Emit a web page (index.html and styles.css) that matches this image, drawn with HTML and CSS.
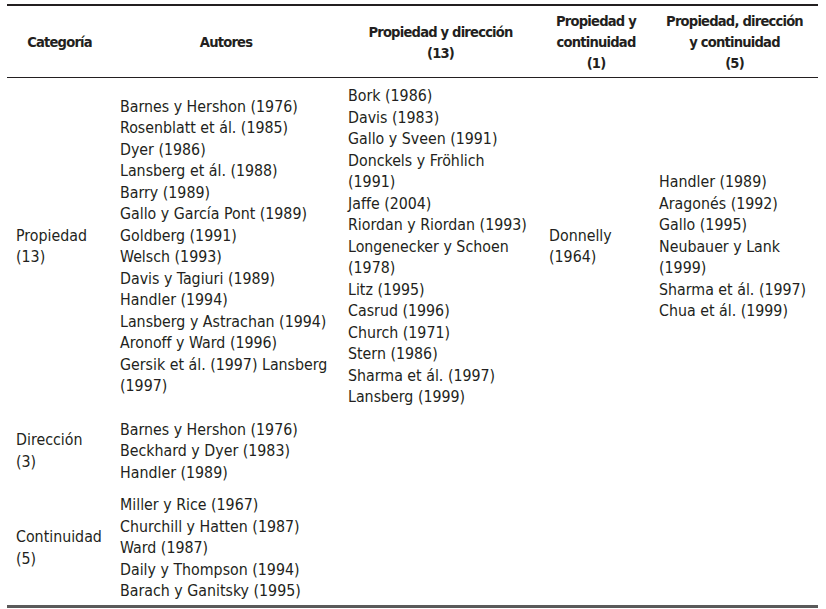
FILE: index.html
```html
<!DOCTYPE html>
<html lang="es">
<head>
<meta charset="utf-8">
<title>Categorías</title>
<link rel="stylesheet" href="styles.css">
</head>
<body>
<table class="tbl">
  <colgroup>
    <col class="c1"><col class="c2"><col class="c3"><col class="c4"><col class="c5">
  </colgroup>
  <thead>
    <tr>
      <th>Categoría</th>
      <th>Autores</th>
      <th>Propiedad y dirección<br>(13)</th>
      <th>Propiedad y<br>continuidad<br>(1)</th>
      <th>Propiedad, dirección<br>y continuidad<br>(5)</th>
    </tr>
  </thead>
  <tbody>
    <tr class="r1">
      <td>Propiedad<br>(13)</td>
      <td>
        <div>Barnes y Hershon (1976)</div>
        <div>Rosenblatt et ál. (1985)</div>
        <div>Dyer (1986)</div>
        <div>Lansberg et ál. (1988)</div>
        <div>Barry (1989)</div>
        <div>Gallo y García Pont (1989)</div>
        <div>Goldberg (1991)</div>
        <div>Welsch (1993)</div>
        <div>Davis y Tagiuri (1989)</div>
        <div>Handler (1994)</div>
        <div>Lansberg y Astrachan (1994)</div>
        <div>Aronoff y Ward (1996)</div>
        <div>Gersik et ál. (1997) Lansberg</div>
        <div>(1997)</div>
      </td>
      <td>
        <div>Bork (1986)</div>
        <div>Davis (1983)</div>
        <div>Gallo y Sveen (1991)</div>
        <div>Donckels y Fröhlich</div>
        <div>(1991)</div>
        <div>Jaffe (2004)</div>
        <div>Riordan y Riordan (1993)</div>
        <div>Longenecker y Schoen</div>
        <div>(1978)</div>
        <div>Litz (1995)</div>
        <div>Casrud (1996)</div>
        <div>Church (1971)</div>
        <div>Stern (1986)</div>
        <div>Sharma et ál. (1997)</div>
        <div>Lansberg (1999)</div>
      </td>
      <td>Donnelly<br>(1964)</td>
      <td>
        <div>Handler (1989)</div>
        <div>Aragonés (1992)</div>
        <div>Gallo (1995)</div>
        <div>Neubauer y Lank</div>
        <div>(1999)</div>
        <div>Sharma et ál. (1997)</div>
        <div>Chua et ál. (1999)</div>
      </td>
    </tr>
    <tr class="r2">
      <td>Dirección<br>(3)</td>
      <td>
        <div>Barnes y Hershon (1976)</div>
        <div>Beckhard y Dyer (1983)</div>
        <div>Handler (1989)</div>
      </td>
      <td></td>
      <td></td>
      <td></td>
    </tr>
    <tr class="r3">
      <td>Continuidad<br>(5)</td>
      <td>
        <div>Miller y Rice (1967)</div>
        <div>Churchill y Hatten (1987)</div>
        <div>Ward (1987)</div>
        <div>Daily y Thompson (1994)</div>
        <div>Barach y Ganitsky (1995)</div>
      </td>
      <td></td>
      <td></td>
      <td></td>
    </tr>
  </tbody>
</table>
</body>
</html>
```
FILE: styles.css
```css
html, body {
  margin: 0;
  padding: 0;
  background: #ffffff;
}

body {
  padding: 4px 8px 0 7px;
  font-family: "DejaVu Sans Condensed", "DejaVu Sans", sans-serif;
  font-stretch: condensed;
  color: #231f20;
}

.tbl {
  width: 811px;
  border-collapse: collapse;
  table-layout: fixed;
  border-top: 2px solid #231f20;
  border-bottom: 3px solid #5a5a5a;
  font-size: 15.8px;
  line-height: 21.5px;
}

.c1 { width: 105px; }
.c2 { width: 228px; }
.c3 { width: 201px; }
.c4 { width: 110px; }
.c5 { width: 167px; }

.tbl th {
  font-weight: bold;
  font-size: 14.6px;
  line-height: 21px;
  letter-spacing: -0.8px;
  text-align: center;
  vertical-align: middle;
  padding: 4px 8px 4px 8px;
  height: 63px;
  border-bottom: 1px solid #231f20;
  white-space: nowrap;
}

.tbl td {
  text-align: left;
  vertical-align: middle;
  padding: 7px 8px 6px 8px;
  white-space: nowrap;
}

.tbl td:first-child {
  padding-left: 9px;
}

.r2 td {
  padding-top: 5px;
  padding-bottom: 5px;
}

.r3 td {
  padding-top: 6px;
  padding-bottom: 3px;
}
```
